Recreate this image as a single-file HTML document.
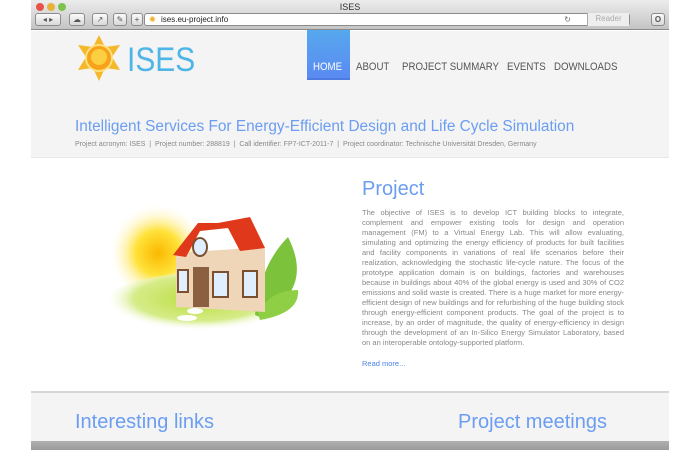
<!DOCTYPE html>
<html><head><meta charset="utf-8"><style>
*{margin:0;padding:0;box-sizing:border-box}
body{width:700px;height:450px;background:#fff;font-family:"Liberation Sans",sans-serif;position:relative;overflow:hidden}
.win{position:absolute;left:31px;top:0;width:638px;height:450px;overflow:hidden}
.chrome{position:absolute;left:0;top:0;width:638px;height:30px;background:linear-gradient(#ececec,#c4c4c4);border-bottom:1px solid #8a8a8a}
.title{position:absolute;top:2px;width:100%;text-align:center;font-size:9px;color:#333}
.dot{position:absolute;top:3px;width:8px;height:8px;border-radius:50%}
.btn{position:absolute;top:13px;height:13px;border:1px solid #8c8c8c;border-radius:3px;background:linear-gradient(#fbfbfb,#d8d8d8);font-size:8px;color:#555;text-align:center;line-height:11px}
.url{position:absolute;left:113px;top:13px;width:486px;height:13px;border:1px solid #8c8c8c;border-radius:3px;background:#fff;font-size:8px;line-height:11px;padding-left:16px;color:#222}
.hdr{position:absolute;left:0;top:31px;width:638px;height:127px;background:#f4f4f4;border-bottom:1px solid #e8e8e8}
.nav{position:absolute;font-size:11px;color:#555;white-space:nowrap;transform-origin:0 0;transform:scaleX(0.88)}
.home{position:absolute;left:276px;top:-1px;width:43px;height:50px;background:linear-gradient(#56a8ee,#5b8af2);border-bottom:2px solid #4d7be0}
.h1{position:absolute;left:44px;top:87px;font-size:15.4px;color:#6b9df1;white-space:nowrap}
.sub{position:absolute;left:44px;top:110px;font-size:7px;color:#888;white-space:nowrap}
.proj{position:absolute;left:331px;top:178px;font-size:20px;color:#6b9df1}
.txt{position:absolute;left:331px;top:208px;width:262px;font-size:7.5px;line-height:10px;color:#888;text-align:justify}
.more{position:absolute;left:331px;top:359px;font-size:7.5px;color:#4b84e6}
.bot{position:absolute;left:0;top:391px;width:638px;height:60px;background:#f4f4f4;border-top:2px solid #d6d6d6}
.h2{position:absolute;top:18px;font-size:20px;color:#6b9df1;white-space:nowrap}
.bar{position:absolute;left:0;top:441px;width:638px;height:9px;background:linear-gradient(#b0b0b0,#9a9a9a)}
</style></head><body>
<div class="win">
<div class="chrome">
<div class="title">ISES</div>
<div class="dot" style="left:5px;background:#e9524a"></div>
<div class="dot" style="left:16px;background:#e8b23a"></div>
<div class="dot" style="left:27px;background:#7bc34a"></div>
<div class="btn" style="left:4px;width:26px">◂ ▸</div>
<div class="btn" style="left:38px;width:16px">☁</div>
<div class="btn" style="left:61px;width:16px">↗</div>
<div class="btn" style="left:82px;width:14px">✎</div>
<div class="btn" style="left:100px;width:12px">+</div>
<div class="url"><span style="position:absolute;left:4px;color:#f0b020">✺</span>ises.eu-project.info<span style="position:absolute;right:58px;color:#666">↻</span><span style="position:absolute;right:0;top:-1px;width:42px;height:13px;border-left:1px solid #aaa;background:#eee;color:#aaa;text-align:center">Reader</span></div>
<div class="btn" style="left:620px;width:14px;font-weight:bold">O</div>
</div>
<div class="hdr">
<svg style="position:absolute;left:45px;top:4px" width="46" height="46" viewBox="0 0 46 46">
<polygon points="23,0 29,12 44,10 36,22 44,35 29,33 23,46 17,33 2,35 10,22 2,10 17,12" fill="#f5b82a"/>
<circle cx="23" cy="23" r="13" fill="#f7a21a" stroke="#fde07a" stroke-width="2"/>
<circle cx="23" cy="22" r="8" fill="#fbd040"/>
</svg>
<div style="position:absolute;left:96px;top:10px;font-size:34px;color:#4fb5e8;transform-origin:0 0;transform:scaleX(0.88)">ISES</div>
<div class="home"></div>
<div class="nav" style="left:282px;top:30px;color:#fff">HOME</div>
<div class="nav" style="left:325px;top:30px">ABOUT</div>
<div class="nav" style="left:371px;top:30px">PROJECT SUMMARY</div>
<div class="nav" style="left:476px;top:30px">EVENTS</div>
<div class="nav" style="left:523px;top:30px">DOWNLOADS</div>
<div class="h1">Intelligent Services For Energy-Efficient Design and Life Cycle Simulation</div>
<div class="sub">Project acronym: ISES &nbsp;|&nbsp; Project number: 288819 &nbsp;|&nbsp; Call identifier: FP7-ICT-2011-7 &nbsp;|&nbsp; Project coordinator: Technische Universität Dresden, Germany</div>
</div>
<svg style="position:absolute;left:69px;top:195px" width="200" height="145" viewBox="0 0 200 145">
<defs><radialGradient id="s"><stop offset="0" stop-color="#fbb800"/><stop offset=".45" stop-color="#ffe23a"/><stop offset="1" stop-color="#fff" stop-opacity="0"/></radialGradient>
<radialGradient id="g" cx=".5" cy=".4"><stop offset="0" stop-color="#b8dc3a"/><stop offset=".7" stop-color="#d6ec8a"/><stop offset="1" stop-color="#fff" stop-opacity="0"/></radialGradient></defs>
<circle cx="58" cy="58" r="50" fill="url(#s)"/>
<ellipse cx="100" cy="110" rx="95" ry="32" fill="url(#g)"/>
<path d="M160 122 Q215 95 188 42 Q160 70 155 120Z" fill="#7cc23a"/>
<path d="M160 125 Q200 118 198 95 Q170 95 158 118Z" fill="#8fcf45"/>
<path d="M76 58 L165 52 L165 117 L76 112Z" fill="#efd6b8"/>
<path d="M73 60 L98 28 L118 28 L150 22 L165 53 L140 56 L128 33 L100 36 L86 62Z" fill="#e0381a"/>
<rect x="93" y="72" width="16" height="40" fill="#8a6040"/>
<rect x="78" y="75" width="10" height="22" fill="#dfefff" stroke="#7a5030" stroke-width="2"/>
<rect x="113" y="77" width="15" height="25" fill="#dfefff" stroke="#7a5030" stroke-width="2"/>
<rect x="143" y="76" width="14" height="26" fill="#dfefff" stroke="#7a5030" stroke-width="2"/>
<ellipse cx="100" cy="52" rx="7" ry="9" fill="#dfefff" stroke="#7a5030" stroke-width="2"/>
<ellipse cx="95" cy="116" rx="8" ry="3" fill="#fff"/><ellipse cx="87" cy="123" rx="10" ry="3" fill="#fff"/>
</svg>
<div class="proj">Project</div>
<div class="txt">The objective of ISES is to develop ICT building blocks to integrate, complement and empower existing tools for design and operation management (FM) to a Virtual Energy Lab. This will allow evaluating, simulating and optimizing the energy efficiency of products for built facilities and facility components in variations of real life scenarios before their realization, acknowledging the stochastic life-cycle nature. The focus of the prototype application domain is on buildings, factories and warehouses because in buildings about 40% of the global energy is used and 30% of CO2 emissions and solid waste is created. There is a huge market for more energy-efficient design of new buildings and for refurbishing of the huge building stock through energy-efficient component products. The goal of the project is to increase, by an order of magnitude, the quality of energy-efficiency in design through the development of an In-Silico Energy Simulator Laboratory, based on an interoperable ontology-supported platform.</div>
<div class="more">Read more...</div>
<div class="bot">
<div class="h2" style="left:44px">Interesting links</div>
<div class="h2" style="left:427px">Project meetings</div>
</div>
<div class="bar"></div>
</div>
</body></html>
